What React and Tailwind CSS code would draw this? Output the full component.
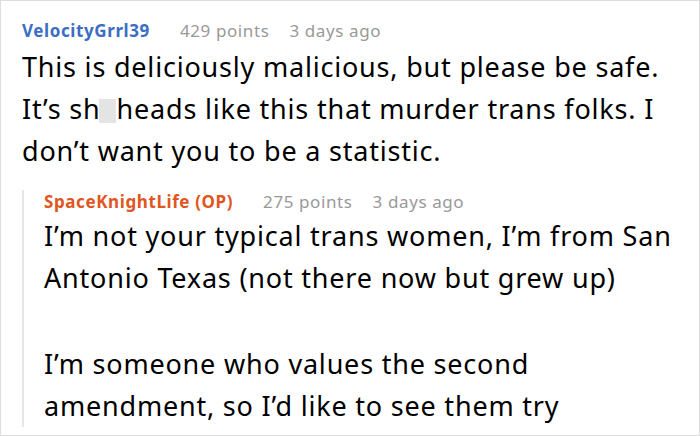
import React from 'react';

const font = { fontFamily: '"Noto Sans", "Open Sans", sans-serif' };

const CommentHeader = ({ name, nameColor, points, time }) => (
  <div className="flex items-baseline text-[17px] leading-[24px] tracking-[0.6px]">
    <span className={`font-bold ${nameColor}`}>{name}</span>
    <span className="ml-[30px] text-[#999999]">{points}</span>
    <span className="ml-[20px] text-[#999999]">{time}</span>
  </div>
);

const Censor = () => (
  <span className="inline-block w-[17px] h-[24px] bg-[#e4e4e4] align-[-4px] -ml-[2px] mr-[1px]" />
);

export default function App() {
  return (
    <div
      className="w-[700px] h-[436px] overflow-hidden bg-white border border-[#dddddd] text-black"
      style={font}
    >
      <div className="pl-[21px] pr-3 pt-[18px]">
        <CommentHeader
          name="VelocityGrrl39"
          nameColor="text-[#3b6ec2]"
          points="429 points"
          time="3 days ago"
        />
        <p className="mt-[3px] text-[27px] leading-[42px] tracking-[0.8px]">
          This is deliciously malicious, but please be safe. It’s sh<Censor />heads like this that
          murder trans folks. I don’t want you to be a statistic.
        </p>

        <div className="mt-[26px] border-l-2 border-[#e6e6e6] pl-[20px]">
          <div className="-mt-[8px]">
            <CommentHeader
              name="SpaceKnightLife (OP)"
              nameColor="text-[#e0561f]"
              points="275 points"
              time="3 days ago"
            />
          </div>
          <div className="mt-[1px] text-[27px] leading-[42px] tracking-[0.8px]">
            <p>I’m not your typical trans women, I’m from San Antonio Texas (not there now but grew up)</p>
            <p className="mt-[44px]">I’m someone who values the second amendment, so I’d like to see them try</p>
          </div>
        </div>
      </div>
    </div>
  );
}
